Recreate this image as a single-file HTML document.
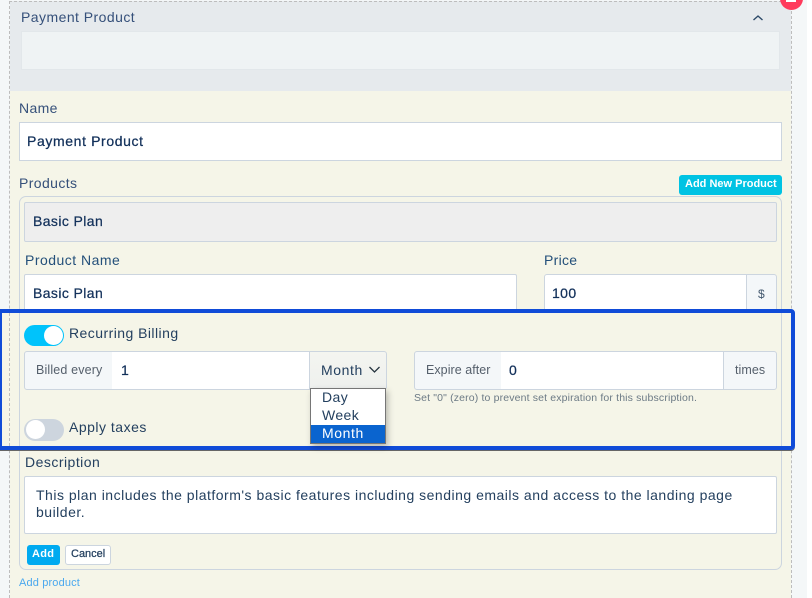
<!DOCTYPE html>
<html><head><meta charset="utf-8"><style>
html,body{margin:0;padding:0;width:812px;height:598px;overflow:hidden}
body{background:#fff;font-family:"Liberation Sans",sans-serif;color:#1d3a5c}
#r{position:relative;width:812px;height:598px;overflow:hidden}
.a{position:absolute;box-sizing:border-box}
.t{position:absolute;white-space:nowrap;line-height:18px;font-size:14px}
.b{border:1px solid #ccd5df}
.w{background:#fff}
.g{background:#f4f7f9}
.d{-webkit-text-stroke:.25px currentColor}
</style></head><body><div id="r">
<div class="a" style="left:0;top:0;width:807px;height:598px;background:#f4f7f8"></div>
<div class="a" style="left:10px;top:1px;width:781px;height:90px;background:#e6eaed"></div>
<div class="a" style="left:10px;top:91px;width:781px;height:507px;background:#f5f5e8"></div>
<div class="a" style="left:9px;top:1px;width:783px;height:597px;border:1px dashed #bdbdbd;border-bottom:0"></div>
<div class="t" style="left:21px;top:8px;letter-spacing:.45px;color:#35507a">Payment Product</div>
<svg class="a" style="left:752px;top:14px" width="12" height="8"><path d="M1.5 6L6 2l4.5 4" fill="none" stroke="#2c4a68" stroke-width="1.4"/></svg>
<div class="a" style="left:21px;top:31px;width:759px;height:39px;background:#eff3f4;border:1px solid #e2e7ea"></div>
<div class="a" style="left:780px;top:-13px;width:23px;height:23px;border-radius:50%;background:#ff3b5c"></div>
<div class="a" style="left:786px;top:0;width:10px;height:2px;background:#fff"></div>

<div class="t" style="left:19px;top:99px;letter-spacing:.35px;color:#35507a">Name</div>
<div class="a b w" style="left:19px;top:122px;width:763px;height:39px"></div>
<div class="t d" style="left:27px;top:132px;letter-spacing:.62px;color:#12305a">Payment Product</div>
<div class="t" style="left:19px;top:174px;letter-spacing:.4px;color:#35507a">Products</div>
<div class="a" style="left:679px;top:175px;width:103px;height:20px;background:#00c3e3;border-radius:3px"></div>
<div class="t" style="left:685px;top:175px;font-size:11px;line-height:19px;font-weight:bold;color:#fff;letter-spacing:0">Add New Product</div>

<div class="a b" style="left:19px;top:196px;width:763px;height:374px;border-radius:7px"></div>
<div class="a b" style="left:24px;top:202px;width:753px;height:40px;background:#eee;border-radius:2px"></div>
<div class="t d" style="left:33px;top:212px;letter-spacing:.4px;color:#12305a">Basic Plan</div>
<div class="t" style="left:25px;top:251px;letter-spacing:.48px;color:#24507a">Product Name</div>
<div class="t" style="left:544px;top:251px;letter-spacing:.3px;color:#24507a">Price</div>
<div class="a b w" style="left:24px;top:274px;width:493px;height:50px;border-radius:2px"></div>
<div class="t d" style="left:33px;top:284px;letter-spacing:.4px;color:#12305a">Basic Plan</div>
<div class="a b w" style="left:544px;top:274px;width:204px;height:50px;border-radius:3px 0 0 0"></div>
<div class="t d" style="left:552px;top:284px;color:#12305a;letter-spacing:.4px">100</div>
<div class="a b g" style="left:746px;top:274px;width:31px;height:50px;border-radius:0 3px 0 0"></div>
<div class="t" style="left:758px;top:285px;font-size:12px;color:#44596f">$</div>

<!-- frame cover -->
<div class="a" style="left:0;top:313px;width:791px;height:133px;background:#f5f5e8"></div>
<div class="a" style="left:9px;top:313px;width:1px;height:133px;border-left:1px dashed #bdbdbd"></div>
<div class="a" style="left:19px;top:313px;width:1px;height:133px;background:#ccd5df"></div>
<div class="a" style="left:781px;top:313px;width:1px;height:133px;background:#ccd5df"></div>
<div class="a" style="left:0;top:309px;width:795px;height:141px;border:4px solid #0f4bd8;border-left-width:2px;border-radius:0 4px 4px 0;box-shadow:0 1px 0 #666"></div>

<div class="a" style="left:24px;top:325px;width:40px;height:21px;border-radius:11px;background:#00c3fb"></div>
<div class="a" style="left:44px;top:326px;width:19px;height:19px;border-radius:50%;background:#fff"></div>
<div class="t" style="left:69px;top:324px;letter-spacing:.45px;color:#24405f">Recurring Billing</div>

<div class="a b g" style="left:24px;top:351px;width:89px;height:39px;border-radius:3px 0 0 3px"></div>
<div class="t" style="left:36px;top:361px;font-size:12.5px;color:#555f6b;letter-spacing:.15px">Billed every</div>
<div class="a b w" style="left:112px;top:351px;width:198px;height:39px;border-left:0;border-right:0"></div>
<div class="t d" style="left:121px;top:361px;color:#12305a">1</div>
<div class="a b" style="left:309px;top:351px;width:78px;height:39px;background:linear-gradient(#f4f5f0,#eef0ee);border-radius:0 3px 3px 0"></div>
<div class="t" style="left:321px;top:361px;letter-spacing:.6px;color:#24405f">Month</div>
<svg class="a" style="left:368px;top:365px" width="14" height="10"><path d="M1.5 2l5 5 5-5" fill="none" stroke="#26343f" stroke-width="1.3"/></svg>

<div class="a b g" style="left:414px;top:351px;width:88px;height:39px;border-radius:3px 0 0 3px"></div>
<div class="t" style="left:426px;top:361px;font-size:12.5px;color:#555f6b;letter-spacing:.05px">Expire after</div>
<div class="a b w" style="left:501px;top:351px;width:223px;height:39px;border-left:0;border-right:0"></div>
<div class="t d" style="left:509px;top:361px;color:#12305a">0</div>
<div class="a b g" style="left:723px;top:351px;width:54px;height:39px;border-radius:0 3px 3px 0"></div>
<div class="t" style="left:735px;top:361px;font-size:12.5px;color:#555f6b;letter-spacing:.05px">times</div>
<div class="t" style="left:414px;top:389px;font-size:10.5px;color:#6c7a85;letter-spacing:.15px">Set "0" (zero) to prevent set expiration for this subscription.</div>

<div class="a" style="left:310px;top:388px;width:76px;height:56px;background:#fff;border:1px solid #767676;box-shadow:2px 3px 6px rgba(0,0,0,.25)"></div>
<div class="t" style="left:322px;top:388px;letter-spacing:.4px;color:#24405f">Day</div>
<div class="t" style="left:322px;top:406px;letter-spacing:.4px;color:#24405f">Week</div>
<div class="a" style="left:311px;top:425px;width:74px;height:18px;background:#0a64cf"></div>
<div class="t" style="left:322px;top:424px;letter-spacing:.6px;color:#fff">Month</div>

<div class="a" style="left:24px;top:419px;width:40px;height:22px;border-radius:11px;background:#cdd5de"></div>
<div class="a" style="left:26px;top:420px;width:19px;height:19px;border-radius:50%;background:#fff"></div>
<div class="t" style="left:69px;top:418px;letter-spacing:.5px;color:#24405f">Apply taxes</div>

<div class="t" style="left:25px;top:453px;letter-spacing:.48px;color:#24405f">Description</div>
<div class="a b w" style="left:24px;top:476px;width:753px;height:58px;border-radius:2px"></div>
<div class="t" style="left:36px;top:487px;line-height:17px;letter-spacing:.5px;color:#24405f">This plan includes the platform's basic features including sending emails and access to the landing page<br>builder.</div>

<div class="a" style="left:27px;top:545px;width:33px;height:20px;background:#00aaf0;border-radius:3px"></div>
<div class="t" style="left:32px;top:545px;font-size:11px;line-height:19px;font-weight:bold;color:#fff;letter-spacing:.3px">Add</div>
<div class="a b w" style="left:65px;top:545px;width:46px;height:20px;border-radius:3px"></div>
<div class="t d" style="left:71px;top:545px;font-size:11px;line-height:19px;color:#24405f;letter-spacing:0">Cancel</div>
<div class="t" style="left:19px;top:574px;font-size:11px;color:#4aa8ee;letter-spacing:.15px">Add product</div>
<div class="a" style="left:807px;top:0;width:5px;height:598px;background:#fff"></div>
</div></body></html>
